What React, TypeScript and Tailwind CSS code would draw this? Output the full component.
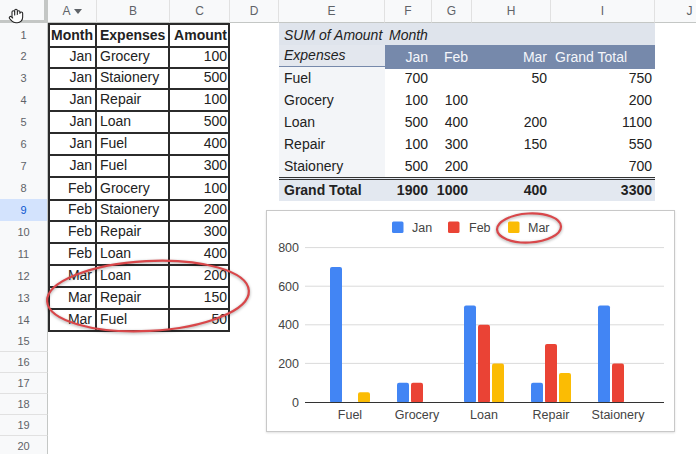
import { Hand } from 'lucide-react'

const GRID = 'grid grid-cols-[48px_49px_73px_60px_49px_106px_47px_40px_79px_104px_70px]'

const entries: [string, string, number][] = [
  ['Jan', 'Grocery', 100],
  ['Jan', 'Staionery', 500],
  ['Jan', 'Repair', 100],
  ['Jan', 'Loan', 500],
  ['Jan', 'Fuel', 400],
  ['Jan', 'Fuel', 300],
  ['Feb', 'Grocery', 100],
  ['Feb', 'Staionery', 200],
  ['Feb', 'Repair', 300],
  ['Feb', 'Loan', 400],
  ['Mar', 'Loan', 200],
  ['Mar', 'Repair', 150],
  ['Mar', 'Fuel', 50],
]

const pivot: string[][] = [
  ['Fuel', '700', '', '50', '750'],
  ['Grocery', '100', '100', '', '200'],
  ['Loan', '500', '400', '200', '1100'],
  ['Repair', '100', '300', '150', '550'],
  ['Staionery', '500', '200', '', '700'],
]

const chartData = [
  { name: 'Fuel', jan: 700, feb: 0, mar: 50 },
  { name: 'Grocery', jan: 100, feb: 100, mar: 0 },
  { name: 'Loan', jan: 500, feb: 400, mar: 200 },
  { name: 'Repair', jan: 100, feb: 300, mar: 150 },
  { name: 'Staionery', jan: 500, feb: 200, mar: 0 },
]

function HeaderRow() {
  const letters = ['B', 'C', 'D', 'E', 'F', 'G', 'H', 'I', 'J']
  return (
    <div className={`${GRID} h-[23px]`}>
      <div className="bg-[#f8f9fa] border-b-[3px] border-r-[4px] border-[#c4c7c5]" />
      <div className="flex items-center justify-center gap-[3px] bg-[#f8f9fa] border-b border-r border-b-[#c4c7c5] border-r-[#e1e1e1] text-[12px] text-[#5f6368]">
        A
        <svg width="8" height="5" viewBox="0 0 8 5">
          <path d="M0 0h8L4 5z" fill="#5f6368" />
        </svg>
      </div>
      {letters.map((l) => (
        <div
          key={l}
          className="flex items-center justify-center bg-[#f8f9fa] border-b border-r border-b-[#c4c7c5] border-r-[#e1e1e1] text-[12px] text-[#5f6368]"
        >
          {l}
        </div>
      ))}
    </div>
  )
}

function TableCells({ n }: { n: number }) {
  if (n > 14) return <><div /><div /><div /></>
  const base = 'flex items-center border-b-2 border-r-2 border-[#2b2b2b] whitespace-nowrap'
  const top = n === 1 ? ' border-t-2' : ''
  if (n === 1) {
    return (
      <>
        <div className={`${base}${top} border-l-2 justify-end pr-[2px] font-bold`}>Month</div>
        <div className={`${base}${top} pl-[3px] font-bold`}>Expenses</div>
        <div className={`${base}${top} justify-end pr-[1px] font-bold`}>Amount</div>
      </>
    )
  }
  const [m, e, a] = entries[n - 2]
  return (
    <>
      <div className={`${base} border-l-2 justify-end pr-[3px]`}>{m}</div>
      <div className={`${base} pl-[3px]`}>{e}</div>
      <div className={`${base} justify-end pr-[1px]`}>{a}</div>
    </>
  )
}

function PivotCells({ n }: { n: number }) {
  if (n === 1) {
    return (
      <>
        <div className="flex items-center bg-[#dfe4ec] pl-[5px] italic whitespace-nowrap">SUM of Amount</div>
        <div className="flex items-center bg-[#dfe4ec] pl-[4px] italic">Month</div>
        <div className="bg-[#dfe4ec]" />
        <div className="bg-[#dfe4ec]" />
        <div className="bg-[#dfe4ec]" />
      </>
    )
  }
  if (n === 2) {
    return (
      <>
        <div className="flex items-center bg-[#e3e7ee] pl-[5px] italic border-b-[3px] border-[#7689ab]">Expenses</div>
        <div className="flex items-center justify-end bg-[#7689ab] pr-[4px] text-[#f4f6fa]">Jan</div>
        <div className="flex items-center justify-end bg-[#7689ab] pr-[4px] text-[#f4f6fa]">Feb</div>
        <div className="flex items-center justify-end bg-[#7689ab] pr-[4px] text-[#f4f6fa]">Mar</div>
        <div className="flex items-center bg-[#7689ab] pl-[4px] text-[#f4f6fa] whitespace-nowrap">Grand Total</div>
      </>
    )
  }
  if (n >= 3 && n <= 7) {
    const [label, ...vals] = pivot[n - 3]
    return (
      <>
        <div className="flex items-center bg-[#f3f5f8] pl-[5px]">{label}</div>
        {vals.map((v, i) => (
          <div key={i} className={`flex items-center justify-end ${i === 3 ? 'pr-[3px]' : 'pr-[4px]'}`}>
            {v}
          </div>
        ))}
      </>
    )
  }
  if (n === 8) {
    const cell = 'flex items-center bg-[#e3e8f0] font-bold border-t-[3px] border-double border-[#333]'
    return (
      <>
        <div className={`${cell} pl-[5px] whitespace-nowrap`}>Grand Total</div>
        <div className={`${cell} justify-end pr-[4px]`}>1900</div>
        <div className={`${cell} justify-end pr-[4px]`}>1000</div>
        <div className={`${cell} justify-end pr-[4px]`}>400</div>
        <div className={`${cell} justify-end pr-[3px]`}>3300</div>
      </>
    )
  }
  return <><div /><div /><div /><div /><div /></>
}

function DataRow({ n }: { n: number }) {
  const selected = n === 9
  return (
    <div className={`${GRID} ${n <= 14 ? 'h-[22px]' : 'h-[21px]'}`}>
      <div
        className={`flex items-center justify-center border-b border-r border-b-[#e1e1e1] border-r-[#c4c7c5] text-[11px] ${
          selected ? 'bg-[#d3e3fd] text-[#0b57d0]' : 'bg-[#f8f9fa] text-[#5f6368]'
        }`}
      >
        {n}
      </div>
      <TableCells n={n} />
      <div />
      <PivotCells n={n} />
      <div />
    </div>
  )
}

function Chart() {
  const y0 = 192
  const k = 0.193
  const grid = [0, 200, 400, 600, 800]
  const centers = [84, 151, 218, 285, 352]
  const bar = (x: number, v: number, fill: string) =>
    v > 0 ? <rect x={x} y={y0 - v * k} width={12} height={v * k + 1} rx={2} fill={fill} /> : null
  return (
    <div className="absolute left-[266px] top-[210px] w-[409px] h-[222px] border border-[#c8c8c8] bg-white shadow-[0_1px_2px_rgba(0,0,0,0.12)]">
      <svg width="407" height="220" viewBox="1 1 407 220" fontFamily="'Liberation Sans', Arial, sans-serif">
        {/* legend */}
        <rect x={126} y={11.5} width={11.5} height={11.5} rx={1.5} fill="#4285f4" />
        <text x={146} y={21.5} fontSize={12.5} fill="#444">Jan</text>
        <rect x={182} y={11.5} width={11.5} height={11.5} rx={1.5} fill="#ea4335" />
        <text x={203} y={21.5} fontSize={12.5} fill="#444">Feb</text>
        <rect x={242} y={11.5} width={11.5} height={11.5} rx={1.5} fill="#fbbc04" />
        <text x={262} y={21.5} fontSize={12.5} fill="#444">Mar</text>

        {grid.map((g) => (
          <g key={g}>
            {g > 0 && <line x1={39} x2={398} y1={y0 - g * k} y2={y0 - g * k} stroke="#dadada" strokeWidth={1} />}
            <text x={33} y={y0 - g * k + 4.5} fontSize={12.5} fill="#444" textAnchor="end">
              {g}
            </text>
          </g>
        ))}

        {chartData.map((d, i) => {
          const cx = centers[i]
          return (
            <g key={d.name}>
              {bar(cx - 20, d.jan, '#4285f4')}
              {bar(cx - 6, d.feb, '#ea4335')}
              {bar(cx + 8, d.mar, '#fbbc04')}
              <text x={cx} y={208.5} fontSize={12.5} fill="#444" textAnchor="middle">
                {d.name}
              </text>
            </g>
          )
        })}
        <line x1={39} x2={398} y1={y0 + 0.5} y2={y0 + 0.5} stroke="#333" strokeWidth={1} />
      </svg>
    </div>
  )
}

function Annotations() {
  return (
    <svg
      className="absolute left-0 top-0 pointer-events-none drop-shadow-[0_1px_1.5px_rgba(0,0,0,0.35)]"
      width="696"
      height="454"
    >
      <ellipse cx={148} cy={296} rx={101} ry={35} transform="rotate(-3 148 296)" fill="none" stroke="#d9474a" strokeWidth={2.2} />
      <ellipse cx={529} cy={228} rx={32} ry={14.5} transform="rotate(-3 529 228)" fill="none" stroke="#d9474a" strokeWidth={2.2} />
    </svg>
  )
}

export default function App() {
  const rows = Array.from({ length: 20 }, (_, i) => i + 1)
  return (
    <div className="relative w-[696px] h-[454px] overflow-hidden bg-white font-['Liberation_Sans',Arial,sans-serif] text-[14px] text-[#222]">
      <HeaderRow />
      {rows.map((n) => (
        <DataRow key={n} n={n} />
      ))}
      <Chart />
      <Annotations />
      <div className="absolute left-[8px] top-[8px]">
        <Hand size={16} strokeWidth={1.6} fill="white" color="#222" />
      </div>
    </div>
  )
}
